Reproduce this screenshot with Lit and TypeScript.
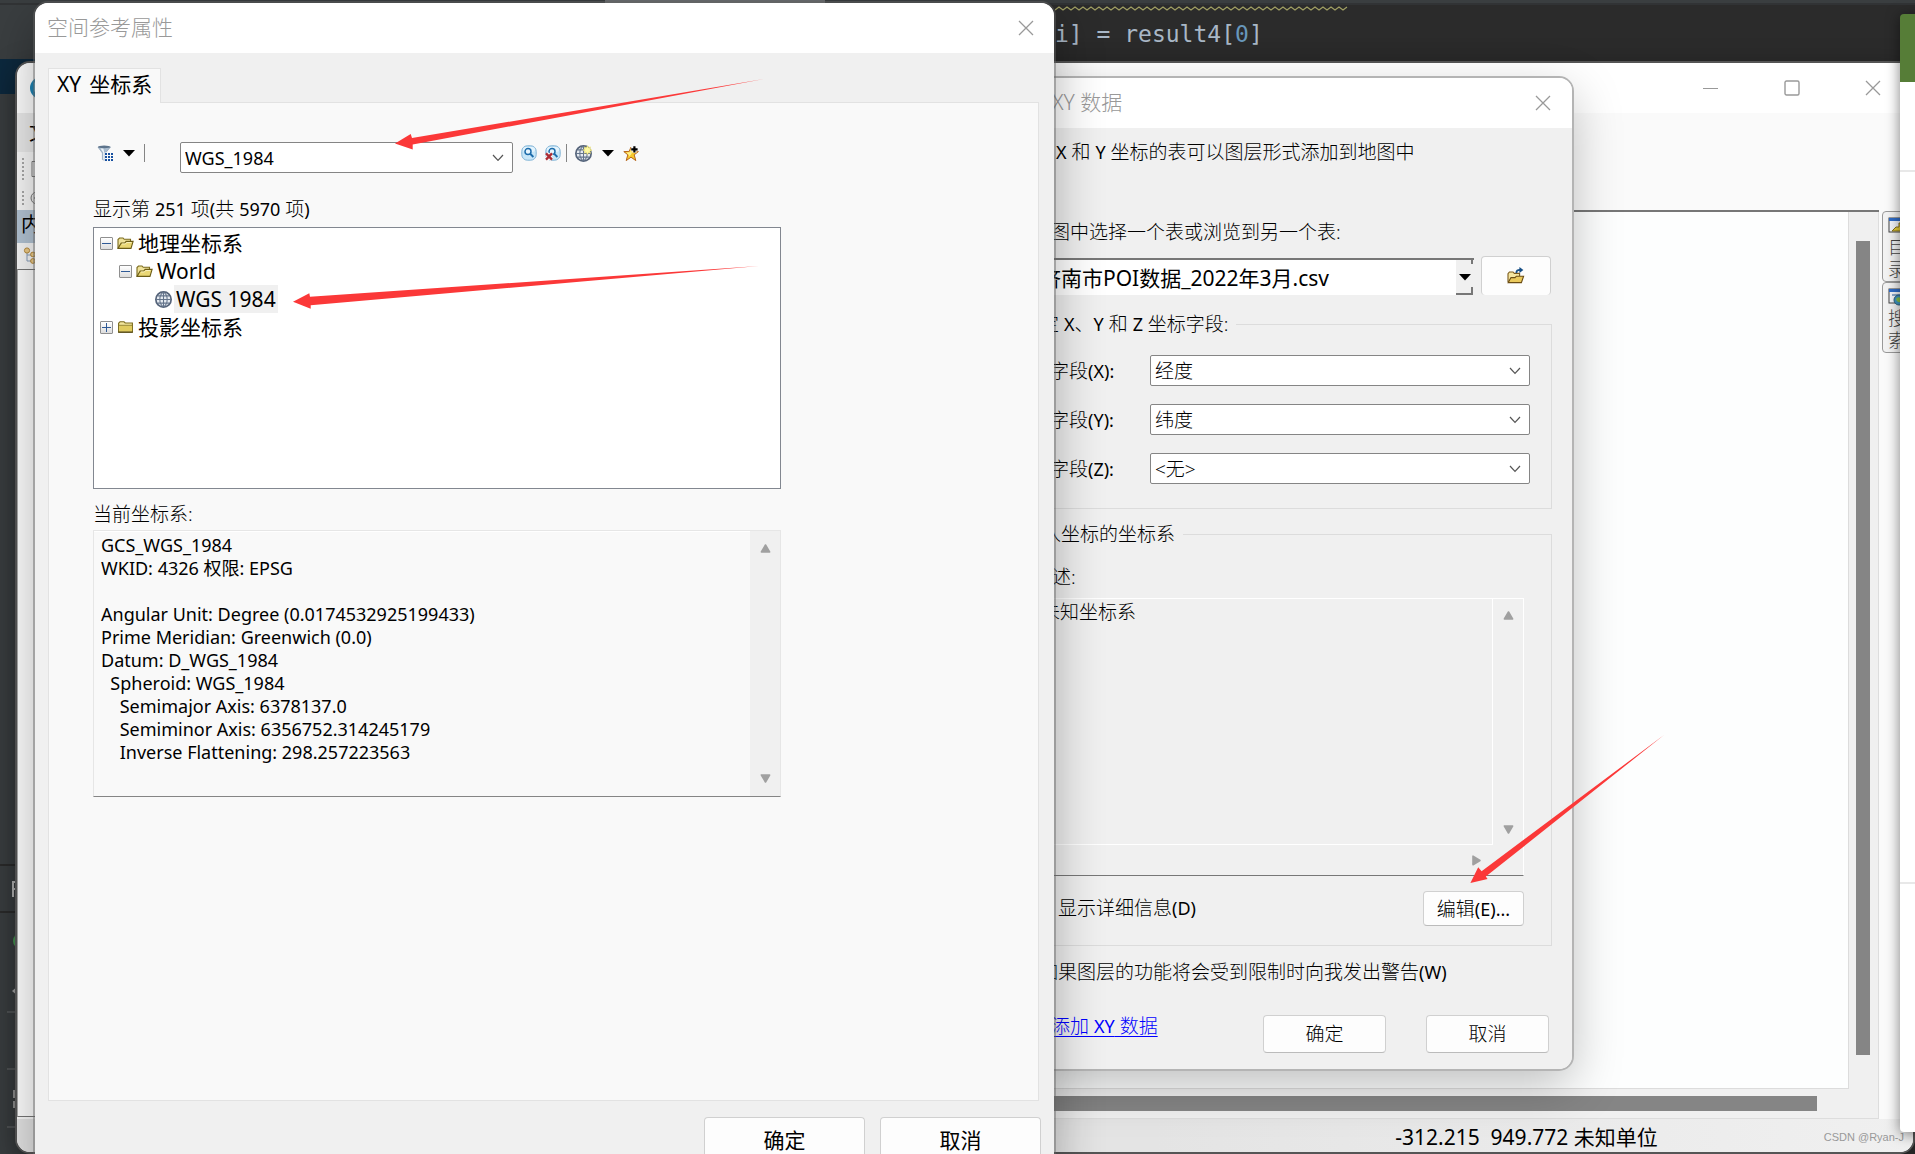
import { LitElement, html, svg, css } from "lit";
import { customElement } from "lit/decorators.js";

const closeIcon = html`<svg width="16" height="16" viewBox="0 0 16 16" aria-hidden="true"><path d="M1 1L15 15M15 1L1 15" stroke="#999" stroke-width="1.3" fill="none"/></svg>`;
const chevron = html`<svg class="chev" width="12" height="8" viewBox="0 0 12 8" aria-hidden="true"><path d="M1 1L6 6.4L11 1" stroke="#555" stroke-width="1.2" fill="none"/></svg>`;
const caret = html`<svg width="12" height="7" viewBox="0 0 12 7" aria-hidden="true"><path d="M0 0H12L6 6.5Z" fill="#000"/></svg>`;
const tri = (d: string) => html`<svg width="11" height="11" viewBox="0 0 11 11" aria-hidden="true"><path d=${d} fill="#a0a0a0" stroke="#a0a0a0" stroke-width="1.6" stroke-linejoin="round"/></svg>`;
const up = "M5.5 2L9.6 9H1.4Z";
const down = "M5.5 9L1.4 2H9.6Z";
const right = "M9 5.5L2 1.2V9.8Z";

const folderOpen = html`<svg width="17" height="16" viewBox="0 0 17 16" aria-hidden="true">
  <path d="M1 13V4.5L2.5 3H6l1.2 1.3H13.5V7" fill="#efe29a" stroke="#7a6a1c" stroke-width="1.1"/>
  <path d="M1 13.4L4.2 8h3.5l1.4-1.6h7L14 13.4Z" fill="#ead774" stroke="#6b5c16" stroke-width="1.1"/>
  <path d="M5 9H8.4L9.7 7.5H14.4" fill="none" stroke="#fbf3c4" stroke-width=".9"/></svg>`;
const folderShut = html`<svg width="17" height="16" viewBox="0 0 17 16" aria-hidden="true">
  <path d="M1.6 13V4.2L3 2.8H7L8.2 4H15.4V13Z" fill="#f1e49c" stroke="#7a6a1c" stroke-width="1.1"/>
  <path d="M2.2 6.8H15V12.4H2.2Z" fill="#e0cb5e"/><path d="M2 6.3H15.2" stroke="#8c7a26" stroke-width=".9"/>
  <path d="M1.2 13.2H15.8" stroke="#4e430e" stroke-width="1.2"/></svg>`;
const globeLines = svg`<circle cx="8" cy="8" r="7.2" fill="#e6ebf1" stroke="#56647a" stroke-width="1.6"/>
  <path d="M8 1V15M1 8H15M2.6 4.6H13.4M2.6 11.4H13.4M8 1C3.4 4 3.4 12 8 15M8 1C12.6 4 12.6 12 8 15" fill="none" stroke="#64748b" stroke-width="1"/>`;
const globe = html`<svg width="17" height="17" viewBox="0 0 16 16" aria-hidden="true">${globeLines}</svg>`;
const globeNew = html`<svg width="17" height="17" viewBox="0 0 16 16" aria-hidden="true">${globeLines}
  <path d="M11.7 .6l1 2 2-.8-.8 2 2 1-2 1 .8 2-2-.8-1 2-1-2-2 .8.8-2-2-1 2-1-.8-2 2 .8Z" fill="#fdf9a2" stroke="#e6d95e" stroke-width=".5"/></svg>`;
const filterIcon = html`<svg width="17" height="17" viewBox="0 0 17 17" aria-hidden="true">
  <path d="M1 2.2L5.4 8V14.6L8.4 15.6V8L13.4 2.2Z" fill="#a9bccf" stroke="#8199b1" stroke-width=".6"/>
  <path d="M3.6 3.6L6.2 7.6V14.4L7.2 14.8V7.4L6.4 3.6Z" fill="#eef4f9"/>
  <ellipse cx="7.2" cy="1.9" rx="6.3" ry="1.3" fill="#5d748c"/>
  <path d="M7.5 7.5H17V17H7.5Z" fill="#f9f9f9"/>
  <path d="M9 8V16M12 8V16M15 8V16" stroke="#1750a0" stroke-width="2" stroke-dasharray="2 1"/></svg>`;
const searchShape = svg`<rect x=".8" y=".8" width="14.4" height="14.4" rx="5.5" fill="#c7e6f8" stroke="#82b4d6"/>
  <rect x="2" y="2" width="12" height="5" rx="3" fill="#e4f4fd"/>
  <circle cx="7" cy="6.6" r="3" fill="#e8f6fe" stroke="#1c6cab" stroke-width="1.5"/><path d="M9.3 8.9L12.4 12" stroke="#1c6cab" stroke-width="2"/>`;
const searchIcon = html`<svg width="16" height="16" viewBox="0 0 16 16" aria-hidden="true">${searchShape}</svg>`;
const searchClear = html`<svg width="16" height="16" viewBox="0 0 16 16" aria-hidden="true">${searchShape}
  <path d="M1.4 8.4L6.8 14.6M6.8 8.4L1.4 14.6" stroke="#f9f9f9" stroke-width="4"/><path d="M1 8.4L7 14.6M7 8.4L1 14.6" stroke="#ac2b33" stroke-width="2.3"/></svg>`;
const starIcon = html`<svg width="17" height="17" viewBox="0 0 17 17" aria-hidden="true">
  <path d="M8 2L9.8 6.4L15.4 6.6L11.2 9.8L12.8 15.6L8 12.2L3.2 15.6L4.8 9.8L.8 6.6L6.2 6.4Z" fill="#f8c92c" stroke="#b5651d" stroke-width="1"/>
  <path d="M8 5L8.9 8L6.6 11.6L5.9 10L3.2 7.4L6.8 7.3Z" fill="#fff08a"/>
  <path d="M11.4 .8V7.8M7.9 4.3H14.9" stroke="#f9f9f9" stroke-width="4"/><path d="M11.4 1.2V7.6M8.2 4.4H14.6" stroke="#000" stroke-width="2.2"/></svg>`;
const browseIcon = html`<svg width="18" height="18" viewBox="0 0 18 18" aria-hidden="true">
  <path d="M1 15V6.6L2.4 5H6L7.3 6.4H12.6V9" fill="#f6e6a0" stroke="#7a5a1c" stroke-width="1.1"/>
  <path d="M1.2 15.6L4 10.6H8L9.4 9.2H16.6L14.4 15.6Z" fill="#eac95c" stroke="#6b4c12" stroke-width="1.1"/>
  <path d="M9.4 6C9.4 3.4 10.6 2.8 13 2.8" fill="none" stroke="#174f86" stroke-width="1.8"/><path d="M12.4 0L16.4 3L12.4 6Z" fill="#174f86"/></svg>`;

const panelIcon = (body: unknown) => html`<svg width="18" height="18" viewBox="0 0 18 18" aria-hidden="true">
  <rect x="1" y="1" width="16" height="14" fill="#f4f6fa" stroke="#444"/><rect x="1" y="1" width="16" height="3" fill="#2f6cc8"/>${body}</svg>`;

const crsText = `GCS_WGS_1984
WKID: 4326 权限: EPSG

Angular Unit: Degree (0.0174532925199433)
Prime Meridian: Greenwich (0.0)
Datum: D_WGS_1984
  Spheroid: WGS_1984
    Semimajor Axis: 6378137.0
    Semiminor Axis: 6356752.314245179
    Inverse Flattening: 298.257223563`;

const shared = css`
  * { box-sizing: border-box; margin: 0; }
  button, input, select, textarea { font: inherit; color: inherit; padding: 0; border: 0; background: none; border-radius: 0; outline: 0; }
  svg { display: block; flex: none; }
  :host {
    font-family: "Noto Sans", "Noto Sans CJK SC", sans-serif;
    font-size: 19px; line-height: 24px; color: #000;
  }
  .lt { font-size: 18px; font-weight: 400; }
  .win { display: flex; flex-direction: column; overflow: hidden; background: #f0f0f0; }
  .title {
    display: flex; justify-content: space-between; align-items: center; flex: none;
    height: 50px; background: #fff; color: #999; font-size: 21px; font-weight: 300;
  }
  .title h1 { font: inherit; padding-bottom: 2px; }
  .icon { display: grid; place-items: center; }
  .push {
    background: #fdfdfd; border: 1px solid #d0d0d0; border-bottom-color: #bbb; border-radius: 4px;
    display: grid; place-items: center;
  }
  .combo { position: relative; }
  .combo select, .combo input { width: 100%; height: 31px; background: #fff; border: 1px solid #858585; border-radius: 2px; padding: 0 4px; appearance: none; font-weight: 300; }
  .combo .chev { position: absolute; right: 9px; top: 12px; pointer-events: none; }
`;

@customElement("crs-dialog")
class CrsDialog extends LitElement {
  static styles = [shared, css`
    .win { height: 100%; border-radius: 13px 13px 0 0; }
    .title { padding: 0 20px 0 12px; }
    .body { flex: 1; display: flex; flex-direction: column; padding: 15px 13px 16px 13px; }
    .tab { display: flex; gap: 8px; align-items: center; align-self: flex-start; height: 35px; padding: 0 8px 4px; margin-bottom: -1px; z-index: 1; border: 1px solid #e2e2e2; border-bottom: 0; background: #f9f9f9; font-size: 21px; }
    .tab .lt, .tree .lt { font-size: 21px; }
    .panel { flex: 1; margin-right: 2px; padding: 39px 44px 0; background: #f9f9f9; border: 1px solid #e2e2e2; }
    .tools { display: flex; height: 31px; }
    .tools .icon { height: 16px; margin-top: 3px; }
    .sep { width: 1px; height: 18px; margin-top: 2px; background: #858585; }
    .filter { width: 24px; margin-right: 5px; }
    .drop { width: 14px; margin-right: 8px; }
    .combo { width: 333px; margin: 0 8px 0 35px; }
    .combo input { font-size: 18px; font-weight: 400; }
    .find { width: 16px; margin-right: 8px; }
    .last { margin-right: 5px; }
    .globe { width: 17px; margin: 0 9px 0 8px; }
    .label { display: block; font-weight: 300; }
    .count { margin-top: 24px; }
    .crs { margin-top: 13px; }
    .tree { list-style: none; width: 688px; max-width: 100%; height: 262px; margin-top: 6px; padding: 1px 6px; background: #fff; border: 1px solid #828790; font-size: 21px; }
    .tree ul { list-style: none; padding-left: 19px; }
    .tree ul ul { padding-left: 36px; }
    .row { display: flex; align-items: center; height: 28px; }
    .exp { width: 13px; height: 13px; margin-right: 4px; border: 1px solid #8f8f8f; border-radius: 1px; background: linear-gradient(#fff, #ddd); display: grid; place-items: center; }
    .name { padding: 0 2px; margin-left: 2px; line-height: 28px; }
    .sel { background: #f0f0f0; }
    .info { display: flex; width: 688px; max-width: 100%; height: 267px; margin-top: 4px; border: 1px solid #e6e6e6; border-bottom-color: #858585; background: #f9f9f9; box-shadow: inset 0 1px #fff; }
    .info textarea { flex: 1; resize: none; overflow: hidden; padding: 3px 7px; font-size: 18px; line-height: 23px; white-space: pre; }
    .bar { display: flex; flex-direction: column; justify-content: space-between; align-items: center; width: 30px; padding: 12px 0; background: #f0f0f0; }
    .actions { display: flex; justify-content: flex-end; gap: 15px; margin-top: 16px; }
    .push { width: 161px; height: 46px; font-size: 21px; }
  `];
  render() {
    return html`<section class="win">
      <header class="title"><h1>空间参考属性</h1><button class="icon" aria-label="关闭">${closeIcon}</button></header>
      <div class="body">
        <button class="tab" role="tab" aria-selected="true"><span class="lt">XY</span><span>坐标系</span></button>
        <div class="panel">
          <div class="tools">
            <button class="icon filter" aria-label="过滤">${filterIcon}</button>
            <button class="icon drop" aria-label="过滤选项">${caret}</button>
            <span class="sep"></span>
            <div class="combo"><input aria-label="搜索" value="WGS_1984" />${chevron}</div>
            <button class="icon find" aria-label="查找">${searchIcon}</button>
            <button class="icon find last" aria-label="清除">${searchClear}</button>
            <span class="sep"></span>
            <button class="icon globe" aria-label="新建坐标系">${globeNew}</button>
            <button class="icon drop" aria-label="新建选项">${caret}</button>
            <button class="icon" aria-label="收藏">${starIcon}</button>
          </div>
          <p class="label count">显示第 <span class="lt">251</span> 项<span class="lt">(</span>共 <span class="lt">5970</span> 项<span class="lt">)</span></p>
          <ul class="tree" role="tree">
            <li role="treeitem">
              <div class="row"><button class="exp" aria-label="折叠"><svg width="9" height="9"><path d="M0 4.5H9" stroke="#2f5a96"/></svg></button>${folderOpen}<span class="name">地理坐标系</span></div>
              <ul><li role="treeitem">
                <div class="row"><button class="exp" aria-label="折叠"><svg width="9" height="9"><path d="M0 4.5H9" stroke="#2f5a96"/></svg></button>${folderOpen}<span class="name lt">World</span></div>
                <ul><li role="treeitem" aria-selected="true"><div class="row">${globe}<span class="name lt sel">WGS 1984</span></div></li></ul>
              </li></ul>
            </li>
            <li role="treeitem"><div class="row"><button class="exp" aria-label="展开"><svg width="9" height="9"><path d="M0 4.5H9M4.5 0V9" stroke="#2f5a96"/></svg></button>${folderShut}<span class="name">投影坐标系</span></div></li>
          </ul>
          <label class="label crs" for="crs">当前坐标系:</label>
          <div class="info"><textarea id="crs" readonly .value=${crsText}></textarea><div class="bar">${tri(up)}${tri(down)}</div></div>
        </div>
        <div class="actions"><button class="push">确定</button><button class="push">取消</button></div>
      </div>
    </section>`;
  }
}

@customElement("xy-dialog")
class XyDialog extends LitElement {
  static styles = [shared, css`
    .win { border-radius: 0 13px 13px 0; font-weight: 300; }
    .title { padding: 0 21px 0 18px; }
    .body { display: flex; flex-direction: column; padding: 12px 20px 16px 0; }
    .intro { padding-left: 22px; }
    .pick { padding-left: 17px; margin: 56px 0 12px; }
    .source { display: flex; gap: 7px; height: 39px; padding-top: 2px; }
    .table { position: relative; flex: 1; height: 37px; border: 1px solid #777; border-width: 2px 0 0; background: #fff; }
    .table select { width: 100%; height: 35px; padding-left: 6px; appearance: none; font-size: 21px; font-weight: 400; }
    .knob { position: absolute; right: 0; top: 0; width: 18px; height: 35px; display: grid; place-items: center; background: #f0f0f0; pointer-events: none; }
    .knob::before, .knob::after { content: ""; position: absolute; left: 0; right: 1px; height: 4px; border-right: 2px solid #777; }
    .knob::before { top: 0; }
    .knob::after { bottom: 0; height: 6px; border-bottom: 2px solid #777; }
    .browse { width: 70px; margin: -2px 1px 0 0; border-bottom: 0; }
    fieldset { border: 1px solid #dcdcdc; border-left: 0; padding: 19px 21px 24px 16px; min-width: 0; }
    legend { padding: 0 7px 0 0; }
    .fields { margin-top: 17px; display: grid; grid-template-columns: auto 380px; justify-content: space-between; align-items: center; row-gap: 18px; }
    .fields legend { margin-left: -10px; }
    .crs { margin-top: 13px; padding: 19px 27px 19px 0; }
    .crs legend { margin-left: 8px; padding-right: 8px; }
    .desc { display: block; padding-left: 18px; margin-bottom: 9px; }
    .info { height: 278px; display: grid; grid-template: 1fr 30px / 1fr 30px; border: 1px solid #fff; border-bottom: 1px solid #777; }
    .info textarea { resize: none; overflow: hidden; padding: 1px 6px; font-weight: 300; border: 1px solid #fff; border-width: 0 1px 1px 0; }
    .vbar { display: flex; flex-direction: column; justify-content: space-between; align-items: center; padding: 11px 0 10px; }
    .hbar { display: flex; justify-content: flex-end; align-items: center; padding-right: 11px; }
    .more { display: flex; justify-content: space-between; margin-top: 15px; height: 35px; }
    .more label, .warn { display: flex; padding-top: 5px; padding-left: 4px; }
    .edit { width: 101px; height: 35px; }
    .tick { appearance: none; width: 20px; }
    .warn { padding: 0; margin: 14px 0 31px 5px; }
    .foot { display: flex; align-items: flex-start; }
    .foot a { margin: -1px auto 0 17px; color: #00f; text-underline-offset: 3px; }
    .foot .push { width: 123px; height: 38px; margin-right: 3px; }
    .foot .ok { margin-right: 40px; }
  `];
  field(id: string, axis: string, value: string) {
    return html`<label for=${id}>字段<span class="lt">(${axis}):</span></label>
      <div class="combo"><select id=${id}><option>${value}</option></select>${chevron}</div>`;
  }
  render() {
    return html`<section class="win">
      <header class="title"><h1>XY 数据</h1><button class="icon" aria-label="关闭">${closeIcon}</button></header>
      <div class="body">
        <p class="intro"><span class="lt">X</span> 和 <span class="lt">Y</span> 坐标的表可以图层形式添加到地图中</p>
        <label class="pick" for="table">图中选择一个表或浏览到另一个表:</label>
        <div class="source">
          <div class="table"><select id="table"><option>济南市POI数据_2022年3月.csv</option></select><span class="knob">${caret}</span></div>
          <button class="push browse" aria-label="浏览">${browseIcon}</button>
        </div>
        <fieldset class="fields">
          <legend>定 <span class="lt">X</span>、<span class="lt">Y</span> 和 <span class="lt">Z</span> 坐标字段:</legend>
          ${this.field("fx", "X", "经度")}${this.field("fy", "Y", "纬度")}${this.field("fz", "Z", "<无>")}
        </fieldset>
        <fieldset class="crs">
          <legend>入坐标的坐标系</legend>
          <label class="desc" for="desc">述:</label>
          <div class="info">
            <textarea id="desc" readonly .value=${"未知坐标系"}></textarea>
            <div class="vbar">${tri(up)}${tri(down)}</div>
            <div class="hbar">${tri(right)}</div>
          </div>
          <div class="more"><label><input class="tick" type="checkbox" />显示详细信息<span class="lt">(D)</span></label><button class="push edit"><span>编辑<span class="lt">(E)...</span></span></button></div>
        </fieldset>
        <p class="warn">如果图层的功能将会受到限制时向我发出警告<span class="lt">(W)</span></p>
        <div class="foot"><a href="#about">添加 <span class="lt">XY</span> 数据</a><button class="push ok">确定</button><button class="push">取消</button></div>
      </div>
    </section>`;
  }
}

@customElement("map-window")
class MapWindow extends LitElement {
  static styles = [shared, css`
    .win { height: 100%; border-radius: 13px; background: #fafafa; }
    .title { padding: 0 32px 0 12px; }
    .ctl { display: flex; gap: 65px; }
    .menu { flex: none; height: 39px; padding: 8px 0 0 12px; font-size: 20px; background: linear-gradient(90deg, #ececec 40px, #fafafa 70%); }
    .strip { flex: none; display: flex; align-items: center; gap: 6px; padding-left: 5px; }
    .s1 { height: 33px; }
    .s2 { height: 25px; }
    .grip { width: 2px; height: 22px; border-left: 2px dotted #aaa; }
    .s2 .grip { height: 14px; }
    .main { flex: 1; display: flex; min-height: 0; }
    .toc { width: 400px; display: flex; flex-direction: column; }
    .toc h2 { height: 33px; padding: 3px 0 0 4px; font-size: 20px; font-weight: 400; background: #b5c6d6; }
    .list { height: 26px; padding: 4px 6px; }
    .tocbody { flex: 1; margin-bottom: 2px; background: #fff; border: 1px solid #777; border-left-color: #aaa; }
    .map { flex: 1; display: grid; grid-template: 1fr 30px / 1fr 30px; background: #f0f0f0; border-top: 2px solid #777; }
    .canvas { background: #fdfefe; border: 1px solid #dcdcdc; border-width: 0 1px 1px 0; }
    .vbar { padding: 29px 8px 0 7px; border-right: 1px solid #ddd; }
    .vbar i { display: block; height: 817px; max-height: 96%; background: #858585; }
    .hbar { padding: 7px 31px 0 0; grid-column: 1 / 3; border-bottom: 1px solid #ddd; border-right: 1px solid #ddd; }
    .hbar i { display: block; height: 15px; margin-right: 30px; background: #858585; }
    .side { width: 34px; padding: 1px 0 0 3px; font-size: 18px; font-weight: 300; color: #444; }
    .side button { display: flex; flex-direction: column; align-items: flex-start; width: 31px; height: 71px; line-height: 22px; padding: 5px 0 0 5px; border: 1px solid #999; border-radius: 4px 0 0 4px; background: #f3f3f3; text-align: left; }
    .side svg { margin-bottom: 1px; }
    .status { flex: none; display: flex; align-items: center; height: 33px; padding: 2px 9px 0 0; background: linear-gradient(90deg, #e4e4e4 60%, #f0f0f0); font-size: 21px; white-space: pre; }
    .coords { margin-left: auto; margin-right: 166px; }
    .mark { font-family: "Liberation Sans", sans-serif; font-size: 11px; color: #999; }
  `];
  render() {
    return html`<section class="win">
      <header class="title">
        <svg width="24" height="24" viewBox="0 0 24 24" aria-hidden="true"><circle cx="12" cy="12" r="11" fill="#1d84b5"/><path d="M5 7C9 2 16 4 18 8S8 20 5 15Z" fill="#6ab8d8"/></svg>
        <div class="ctl">
          <button class="icon" aria-label="最小化"><svg width="16" height="16"><path d="M0 8.5H15" stroke="#999"/></svg></button>
          <button class="icon" aria-label="最大化"><svg width="16" height="16"><rect x="1" y="1" width="14" height="14" rx="1.5" fill="none" stroke="#999" stroke-width="1.4"/></svg></button>
          <button class="icon" aria-label="关闭">${closeIcon}</button>
        </div>
      </header>
      <nav class="menu">文</nav>
      <div class="strip s1"><span class="grip"></span><svg width="18" height="18"><path d="M2 1.5H12L16 5.5V16.5H2Z" fill="#fff" stroke="#777"/></svg></div>
      <div class="strip s2"><span class="grip"></span><svg width="16" height="16"><circle cx="7" cy="8" r="6" fill="#eee" stroke="#777"/><path d="M4 8H10M7 5V11" stroke="#555"/></svg></div>
      <div class="main">
        <aside class="toc"><h2>内</h2>
          <div class="list"><svg width="18" height="18" viewBox="0 0 18 18"><path d="M4 4V14H12M4 8H10" fill="none" stroke="#8aa0bc"/><circle cx="4" cy="3.5" r="2.6" fill="#f2cf8a" stroke="#b98d3e"/><circle cx="10" cy="7.5" r="2.4" fill="#f2cf8a" stroke="#b98d3e"/><circle cx="10" cy="14" r="2.4" fill="#f2cf8a" stroke="#b98d3e"/></svg></div>
          <div class="tocbody"></div>
        </aside>
        <div class="map"><div class="canvas"></div><div class="vbar"><i></i></div><div class="hbar"><i></i></div></div>
        <div class="side">
          <button>${panelIcon(svg`<path d="M4 14L8 10H11V6H15V14Z" fill="#e8cf3a" stroke="#84701a"/>`)}<span>目</span><span>录</span></button>
          <button>${panelIcon(svg`<path d="M4 7H14" stroke="#8aa8cc" stroke-width="2"/><circle cx="11" cy="12" r="5" fill="#3f97c4" stroke="#2c5f7e"/><path d="M8 11C10 8 13 9 13 12S9 15 8 11Z" fill="#8bc34a"/>`)}<span>搜</span><span>索</span></button>
        </div>
      </div>
      <footer class="status"><span class="coords">-312.215  949.772 未知单位</span><span class="mark">CSDN @Ryan-J</span></footer>
    </section>`;
  }
}

const zigzag = Array.from({ length: 74 }, (_, i) => `${i * 4},${i % 2 ? 1 : 4}`).join(" ");

@customElement("app-root")
class AppRoot extends LitElement {
  static styles = [shared, css`
    :host { display: block; position: relative; height: 100vh; overflow: hidden; background: #3a3e40; }
    .ide { position: absolute; inset: 0; display: flex; flex-direction: column; }
    .topline { height: 5px; border-bottom: 2px solid #313335; background: linear-gradient(90deg, transparent 605px, #6a6d70 605px 825px, transparent 825px); }
    .panes { flex: 1; display: flex; }
    .gutter { width: 1050px; padding-top: 54px; }
    .gutter i { display: block; height: 35px; background: #0d293e; }
    .rail { position: absolute; left: 0; bottom: 0; }
    .code { flex: 1; padding: 1px 0 0 5px; background: #2b2b2b; color: #a9b7c6; font: 23px/38px "DejaVu Sans Mono", monospace; white-space: pre; }
    .code svg { margin-bottom: 4px; }
    .num { color: #6897bb; }
    map-window, xy-dialog, crs-dialog, .page { position: absolute; display: block; }
    map-window { inset: 63px 2px 2px 17px; border-radius: 13px; box-shadow: 0 0 0 2px #555, 0 8px 30px rgba(0,0,0,.4); }
    .page { left: calc(100% - 15px); right: -200px; top: 14px; bottom: 22px; border-radius: 4px; border-top: 68px solid #567d37; background: #fff; box-shadow: 0 2px 14px rgba(0,0,0,.5); }
    .page::before { content: ""; display: block; height: 88px; border-bottom: 2px solid #e8e8e8; }
    .page::after { content: ""; display: block; height: 710px; border-bottom: 2px solid #e8e8e8; }
    xy-dialog { left: 1034px; top: 78px; width: 538px; border-radius: 0 13px 13px 0; box-shadow: 0 0 0 2px #b4b4b4, 0 16px 50px rgba(0,0,0,.26); }
    crs-dialog { left: 35px; top: 3px; bottom: -25px; width: 1019px; border-radius: 13px 13px 0 0; box-shadow: 0 0 0 2px rgba(100,100,100,.45), 0 16px 50px rgba(0,0,0,.32); }
    .arrows { position: absolute; left: 0; top: 0; pointer-events: none; }
  `];
  render() {
    return html`
      <div class="ide">
        <div class="topline"></div>
        <div class="panes">
          <div class="gutter"><i></i></div>
          <div class="code"><svg width="294" height="5" viewBox="0 0 294 5"><polyline points=${zigzag} fill="none" stroke="#a09f63" stroke-width="1.2"/></svg>i] = result4[<span class="num">0</span>]</div>
        </div>
        <svg class="rail" width="18" height="354" viewBox="0 0 18 354">
          <path d="M15 4H18M15 16H18M15 40H18M15 51H18" stroke="#8a8d8f" stroke-width="2"/>
          <path d="M0 65H18M0 112H18" stroke="#2b2b2b" stroke-width="2"/>
          <path d="M13 81V97M13 82H18M13 89H18" stroke="#bbb" stroke-width="2"/>
          <circle cx="21" cy="141" r="8" fill="#499c54"/><path d="M12 191L18 186V196Z" fill="#aaa"/>
          <path d="M7 212H18M7 269H18M7 327H18" stroke="#515456" stroke-width="2"/>
          <rect x="15" y="232" width="3" height="18" fill="#b3524d"/><path d="M13 290H18V298H13ZM13 301H18V308H13Z" fill="#999"/>
        </svg>
      </div>
      <map-window></map-window>
      <div class="page"></div>
      <xy-dialog></xy-dialog>
      <crs-dialog></crs-dialog>
      <svg class="arrows" width="1915" height="1154" viewBox="0 0 1915 1154" fill="#fb3838" aria-hidden="true">
        <path d="M395 143.5L410.7 134L412 138L764 79L412.7 144.5L412.7 149.5Z"/>
        <path d="M293 301.8L309.3 293.3L310 296.8L759 266L310.7 305.2L310.7 308.8Z"/>
        <path d="M1470.4 883L1478.2 867.3L1481.6 871.3L1664 735L1485.8 876.6L1487.6 879Z"/>
      </svg>`;
  }
}
